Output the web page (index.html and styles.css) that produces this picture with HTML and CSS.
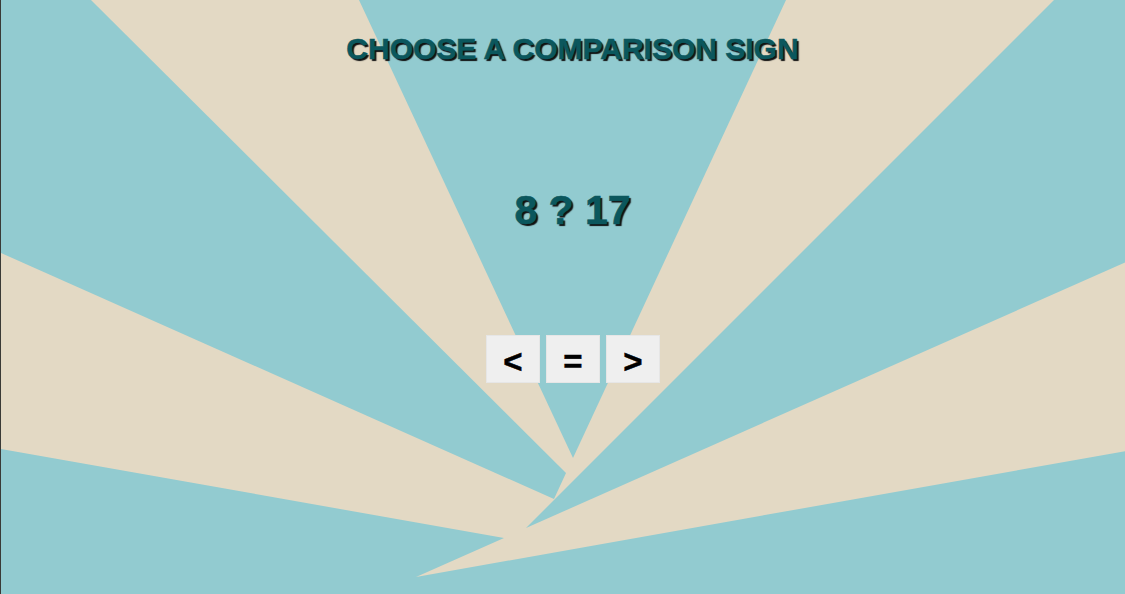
FILE: index.html
```html
<!DOCTYPE html>
<html lang="en">
<head>
<meta charset="utf-8">
<title>Choose a comparison sign</title>
<link rel="stylesheet" href="styles.css">
</head>
<body>
<div class="stage">
  <svg class="burst" width="1125" height="594" viewBox="0 0 1125 594" aria-hidden="true">
    <rect x="0" y="0" width="1125" height="594" fill="#e3d9c4"/>
    <polygon fill="#92cbd0" points="0,0 90,0 565,473 553,499 0,253"/>
    <polygon fill="#92cbd0" points="358,0 785,0 572,458"/>
    <polygon fill="#92cbd0" points="1053,0 1125,0 1125,262 525,528"/>
    <polygon fill="#92cbd0" points="0,449 503,538 415,577 1125,451 1125,594 0,594"/>
  </svg>
  <main class="content">
    <h1 class="title">CHOOSE A COMPARISON SIGN</h1>
    <div class="question">8 ? 17</div>
    <div class="choices">
      <button class="choice" type="button">&lt;</button>
      <button class="choice" type="button">=</button>
      <button class="choice" type="button">&gt;</button>
    </div>
  </main>
</div>
</body>
</html>
```

FILE: styles.css
```css
html, body {
  margin: 0;
  padding: 0;
}

body {
  width: 1125px;
  height: 594px;
  overflow: hidden;
  font-family: "Liberation Sans", Arial, sans-serif;
  background: #92cbd0;
}

.stage {
  position: relative;
  width: 1125px;
  height: 594px;
  border-left: 1px solid #3a3a36;
  box-sizing: border-box;
}

.burst {
  position: absolute;
  left: 0;
  top: 0;
  display: block;
}

.content {
  position: relative;
  display: flex;
  flex-direction: column;
  align-items: center;
  padding: 32px 0 0 19px;
}

.title {
  margin: 0;
  font-size: 30px;
  font-weight: bold;
  line-height: normal;
  color: #0b575d;
  -webkit-text-stroke: 0.6px #0b575d;
  text-shadow: 2px 2px 1px #111;
}

.question {
  margin-top: 121px;
  font-size: 41px;
  font-weight: bold;
  line-height: normal;
  color: #0b575d;
  -webkit-text-stroke: 0.6px #0b575d;
  text-shadow: 2px 2px 1px #111;
}

.choices {
  margin-top: 101px;
  display: flex;
  gap: 6px;
}

.choice {
  width: 54px;
  height: 48px;
  padding: 4px 0 0 1px;
  border: 1px solid #e6e6e6;
  background: #efefef;
  font-family: "Liberation Sans", Arial, sans-serif;
  font-size: 33px;
  font-weight: bold;
  color: #000;
  -webkit-text-stroke: 0.5px #000;
  line-height: 1;
  display: flex;
  align-items: center;
  justify-content: center;
}
```
